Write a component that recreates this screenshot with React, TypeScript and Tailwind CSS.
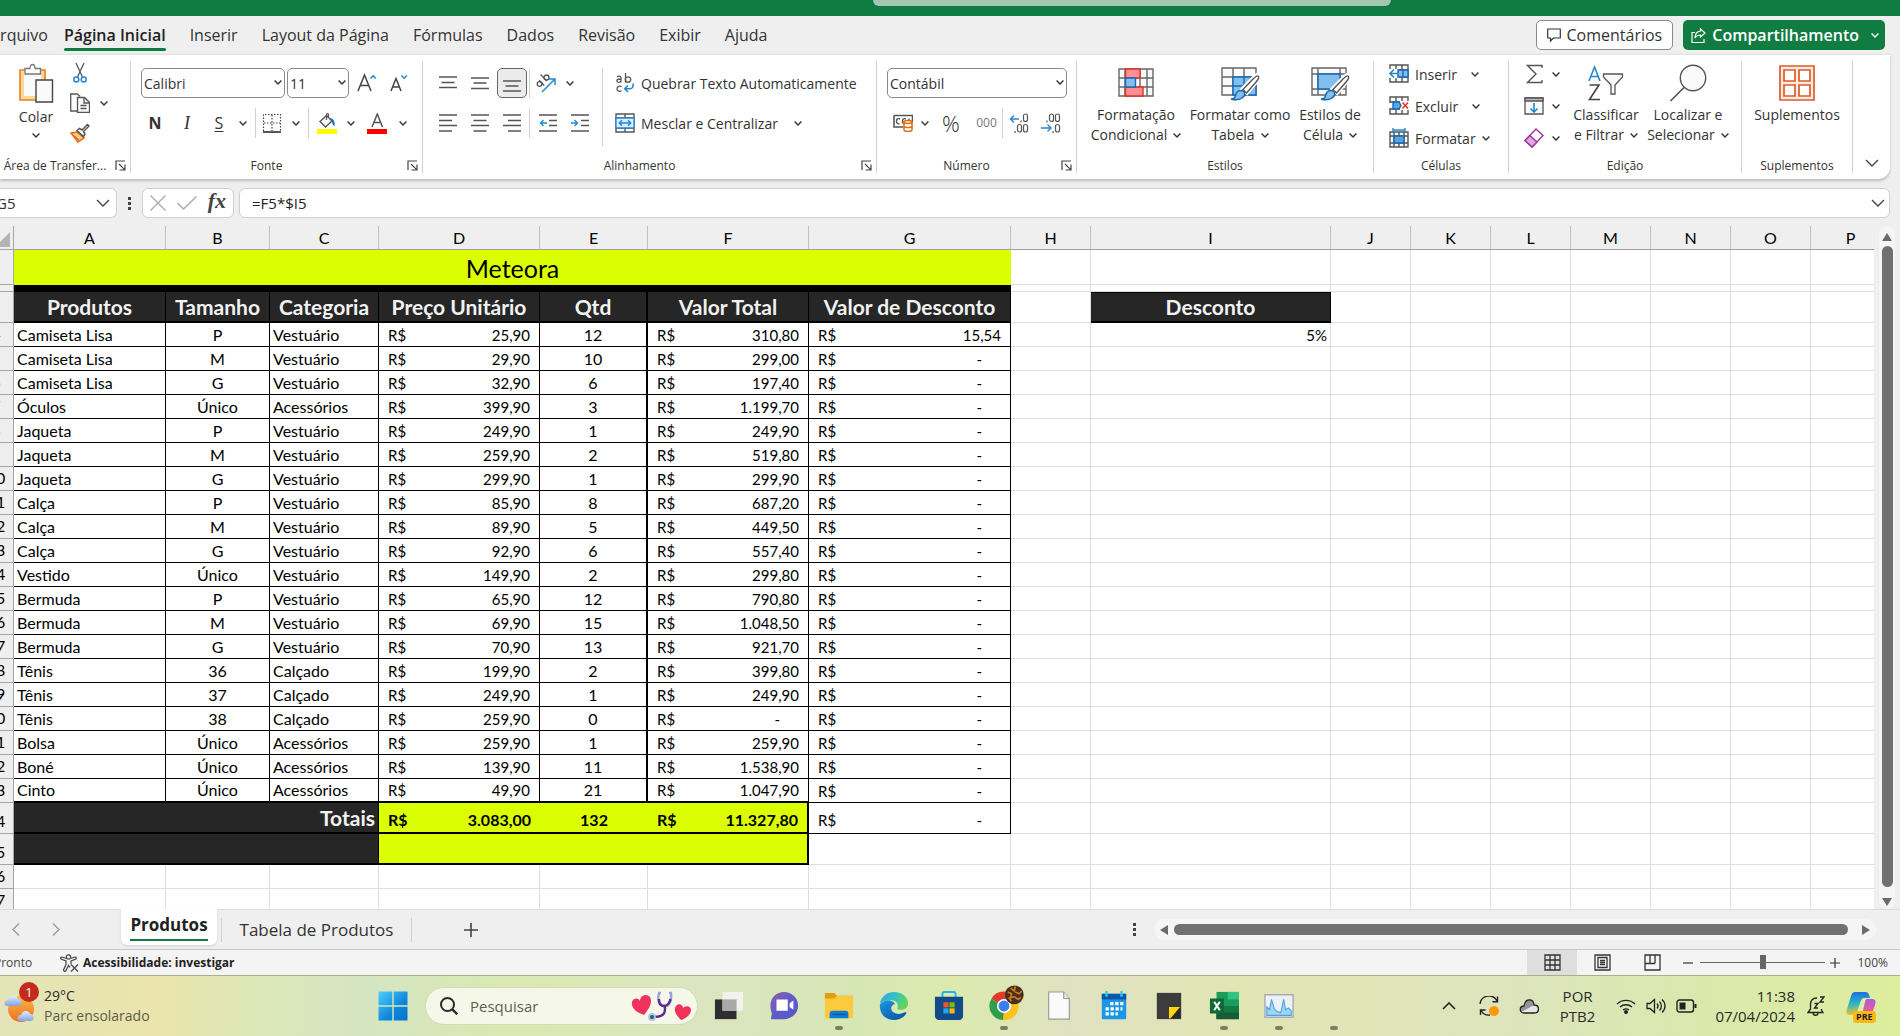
import React, { useState } from 'react';

const tabs = ['Inserir', 'Layout da Página', 'Fórmulas', 'Dados', 'Revisão', 'Exibir', 'Ajuda'];

const columns = ['A', 'B', 'C', 'D', 'E', 'F', 'G', 'H', 'I', 'J', 'K', 'L', 'M', 'N', 'O', 'P'];
const columnWidths = [
  'w-[152px]', 'w-[104px]', 'w-[109px]', 'w-[161px]', 'w-[108px]', 'w-[161px]', 'w-[202px]', 'w-[80px]',
  'w-[240px]', 'w-[80px]', 'w-[80px]', 'w-[80px]', 'w-[80px]', 'w-[80px]', 'w-[80px]', 'w-[80px]',
];

interface Product {
  name: string;
  size: string;
  category: string;
  price: string;
  qty: number;
  total: string;
  discount: string;
}

const row = (name: string, size: string, category: string, price: string, qty: number, total: string, discount = '-'): Product => ({
  name, size, category, price, qty, total, discount,
});

const products: Product[] = [
  row('Camiseta Lisa', 'P', 'Vestuário', '25,90', 12, '310,80', '15,54'),
  row('Camiseta Lisa', 'M', 'Vestuário', '29,90', 10, '299,00'),
  row('Camiseta Lisa', 'G', 'Vestuário', '32,90', 6, '197,40'),
  row('Óculos', 'Único', 'Acessórios', '399,90', 3, '1.199,70'),
  row('Jaqueta', 'P', 'Vestuário', '249,90', 1, '249,90'),
  row('Jaqueta', 'M', 'Vestuário', '259,90', 2, '519,80'),
  row('Jaqueta', 'G', 'Vestuário', '299,90', 1, '299,90'),
  row('Calça', 'P', 'Vestuário', '85,90', 8, '687,20'),
  row('Calça', 'M', 'Vestuário', '89,90', 5, '449,50'),
  row('Calça', 'G', 'Vestuário', '92,90', 6, '557,40'),
  row('Vestido', 'Único', 'Vestuário', '149,90', 2, '299,80'),
  row('Bermuda', 'P', 'Vestuário', '65,90', 12, '790,80'),
  row('Bermuda', 'M', 'Vestuário', '69,90', 15, '1.048,50'),
  row('Bermuda', 'G', 'Vestuário', '70,90', 13, '921,70'),
  row('Tênis', '36', 'Calçado', '199,90', 2, '399,80'),
  row('Tênis', '37', 'Calçado', '249,90', 1, '249,90'),
  row('Tênis', '38', 'Calçado', '259,90', 0, '-'),
  row('Bolsa', 'Único', 'Acessórios', '259,90', 1, '259,90'),
  row('Boné', 'Único', 'Acessórios', '139,90', 11, '1.538,90'),
  row('Cinto', 'Único', 'Acessórios', '49,90', 21, '1.047,90'),
];

/* ---------- small shared pieces ---------- */

const Chev = ({ className = 'w-2 h-[5px]' }: { className?: string }) => (
  <svg viewBox="0 0 8 5" className={`shrink-0 ${className}`} fill="none" stroke="currentColor" strokeWidth="1.4">
    <path d="M.6.6 4 4 7.4.6" />
  </svg>
);

const WideChev = () => (
  <svg viewBox="0 0 14 8" className="h-2 w-3.5 shrink-0" fill="none" stroke="#444" strokeWidth="1.4">
    <path d="M1 1l6 6 6-6" />
  </svg>
);

const Sep = ({ className = 'h-[30px]' }: { className?: string }) => <div className={`w-px shrink-0 bg-[#d0d0d0] ${className}`} />;

const IconButton = ({ label, className = 'w-8', children }: { label: string; className?: string; children: React.ReactNode }) => (
  <button aria-label={label} className={`flex h-[30px] shrink-0 items-center justify-center ${className}`}>
    {children}
  </button>
);

const Picker = ({ label, value, className }: { label: string; value: string; className: string }) => (
  <div className={`relative h-[30px] ${className}`}>
    <select aria-label={label} className="h-full w-full appearance-none rounded-[5px] border border-[#8a8a8a] bg-white pl-0.5 text-[14px] text-[#333]">
      <option>{value}</option>
    </select>
    <Chev className="pointer-events-none absolute right-[3px] top-3 h-[5px] w-2" />
  </div>
);

const Launcher = ({ label }: { label: string }) => (
  <button aria-label={label} className="absolute bottom-0.5 right-1">
    <svg viewBox="0 0 11 11" className="h-[11px] w-[11px]" fill="none" stroke="#444" strokeWidth="1.2">
      <path d="M1 10V1h9M4 4l5.400 5.400M10 4.500V10H4.500" />
    </svg>
  </button>
);

interface GroupProps {
  name: string;
  width: string;
  launcher?: boolean;
  children: React.ReactNode;
}

const Group = ({ name, width, launcher, children }: GroupProps) => (
  <section className={`relative my-1.5 flex shrink-0 flex-col border-r border-[#d0d0d0] ${width}`}>
    <div className="flex h-[95px] shrink-0">{children}</div>
    <h2 className={`whitespace-nowrap text-center text-[12px] leading-5 text-[#333] ${launcher ? 'pr-5' : ''}`}>{name}</h2>
    {launcher && <Launcher label={name} />}
  </section>
);

const BigButton = ({ icon, lines, chev = true, className }: { icon: React.ReactNode; lines: string[]; chev?: boolean; className: string }) => (
  <button className={`flex shrink-0 flex-col items-center whitespace-nowrap text-[14px] leading-5 ${className}`}>
    <span className="flex h-11 items-center">{icon}</span>
    <span>{lines[0]}</span>
    {lines[1] && (
      <span className="flex items-center gap-1.5">
        {lines[1]}
        {chev && <Chev />}
      </span>
    )}
  </button>
);

/* ---------- ribbon icons ---------- */

const PasteIcon = () => (
  <svg viewBox="0 0 36 40" className="h-10 w-9" fill="none">
    <path d="M2 7h25v30H2z" fill="#fbd89b" stroke="#e8811a" strokeWidth="1.6" />
    <path d="M6 9h17v24H6z" fill="#fafafa" />
    <path d="M7 11V5.500h5C12 3 13 1.500 14.500 1.500S17 3 17 5.500h5.500V11z" fill="#fff" stroke="#777" strokeWidth="1.3" />
    <path d="M18 17h16.500v22H18z" fill="#fafafa" stroke="#444" strokeWidth="1.4" />
  </svg>
);

const CutIcon = () => (
  <svg viewBox="0 0 14 20" className="h-5 w-3.5" fill="none">
    <path d="M3 0l6.500 14M11 0L4.500 14" stroke="#555" strokeWidth="1.3" />
    <circle cx="3.300" cy="16.500" r="2.500" stroke="#2488d0" strokeWidth="1.500" />
    <circle cx="10.700" cy="16.500" r="2.500" stroke="#2488d0" strokeWidth="1.500" />
  </svg>
);

const CopyIcon = () => (
  <svg viewBox="0 0 20 20" className="h-5 w-5" fill="none" stroke="#555" strokeWidth="1.3">
    <path d="M7.500 18H.7V1h6.500l3 2.500" />
    <path d="M7.500 4.500h7l5 5v9.800h-12z" fill="#fafafa" />
    <path d="M14 4.500V10h5.500M10.500 12.500h6M10.500 15.500h6" />
  </svg>
);

const BrushIcon = () => (
  <svg viewBox="0 0 20 20" className="h-5 w-5" fill="none">
    <path d="M1 10l6-1 7 6-6 4z" fill="#f9c88b" stroke="#e06c0a" strokeWidth="1.500" />
    <path d="M4 13l5 4" stroke="#e06c0a" strokeWidth="1.200" />
    <path d="M7 7.500l2.500-2L12 7l5.500-5.500L19 3l-5.500 5.500L15 11l-1.500 2.500z" fill="#fff" stroke="#555" strokeWidth="1.500" />
  </svg>
);

const FontSizeIcon = ({ up }: { up?: boolean }) => (
  <svg viewBox="0 0 20 20" className="h-5 w-5" fill="none">
    {up ? (
      <>
        <path d="M1 18L7.500 2 14 18M3.500 12.500h8" stroke="#444" strokeWidth="1.500" />
        <path d="M13.500 5.500l2.700-2.700 2.700 2.700" stroke="#2488d0" strokeWidth="1.500" />
      </>
    ) : (
      <>
        <path d="M2 18L7 5.500 12 18M4 14h6" stroke="#444" strokeWidth="1.500" />
        <path d="M12.500 2.500l2.700 2.700 2.700-2.700" stroke="#2488d0" strokeWidth="1.500" />
      </>
    )}
  </svg>
);

const BordersIcon = () => (
  <svg viewBox="0 0 20 20" className="h-5 w-5" fill="none" stroke="#444">
    <path d="M1.500 18V1.500h17V18M10 2v16M2 10h16" strokeDasharray="1.500 1.500" strokeWidth="1.200" />
    <path d="M1 19h18" strokeWidth="1.800" />
  </svg>
);

const FillIcon = () => (
  <svg viewBox="0 0 20 21" className="h-[21px] w-5" fill="none">
    <path d="M9.500 2.500l5.500 5.500-6.500 6L3 8.500z" fill="#fafafa" stroke="#555" strokeWidth="1.400" />
    <path d="M9.500 7V1.500c0-1.200 2-1.200 2 0V4" stroke="#555" strokeWidth="1.200" />
    <path d="M13 5c3 .5 5.500 3 4.500 8-2-.8-2.500-3-2.500-5z" fill="#1f6fb5" />
    <path d="M0 16h20v5H0z" fill="#ff0" />
  </svg>
);

const FontColorIcon = () => (
  <svg viewBox="0 0 20 21" className="h-[21px] w-5" fill="none">
    <path d="M5 14L10.300 1 15.500 14M6.800 9.500h7" stroke="#555" strokeWidth="1.500" />
    <path d="M0 16h20v5H0z" fill="red" />
  </svg>
);

const Lines = ({ d }: { d: string }) => (
  <svg viewBox="0 0 18 18" className="h-[18px] w-[18px]" fill="none" stroke="#555" strokeWidth="1.400">
    <path d={d} />
  </svg>
);

const OrientationIcon = () => (
  <svg viewBox="0 0 22 20" className="h-5 w-[22px]" fill="none">
    <g stroke="#555" strokeWidth="1.300">
      <circle cx="4.500" cy="11" r="2.300" />
      <path d="M4.200 7.300l5 5.200" />
      <path d="M5.500 1.500l6.500 6.500" />
      <circle cx="11.500" cy="4.500" r="2.500" />
    </g>
    <path d="M7 19L20 6M14 6h6v6" stroke="#2488d0" strokeWidth="1.500" />
  </svg>
);

const IndentIcon = ({ out }: { out?: boolean }) => (
  <svg viewBox="0 0 18 18" className="h-[18px] w-[18px]" fill="none" strokeWidth="1.400">
    <path d="M0 1h18M10 6.500h8M10 11.500h8M0 17h18" stroke="#555" />
    <path d={out ? 'M8 9H1.500M4.500 6L1.500 9l3 3' : 'M0 9h6.500M3.500 6l3 3-3 3'} stroke="#2488d0" />
  </svg>
);

const WrapIcon = () => (
  <svg viewBox="0 0 18 20" className="h-5 w-[18px]" fill="none">
    <g stroke="#555" strokeWidth="1.300">
      <path d="M1 4c1-1.200 4-1.200 4 .7V9.500M5 6c-2 0-4.200 0-4.200 1.800C.8 9.800 4 9.800 5 8" />
      <path d="M9.500 0v9.500" />
      <circle cx="12" cy="6.500" r="2.700" />
      <path d="M5.500 13.700c-1.500-1-4.500-.7-4.500 2s3 3.200 4.500 2" />
    </g>
    <path d="M17 10.500c.5 4-1 5.200-3 5.200H9M12 12.500l-3.300 3.200L12 19" stroke="#2488d0" strokeWidth="1.600" />
  </svg>
);

const MergeIcon = () => (
  <svg viewBox="0 0 20 20" className="h-5 w-5" fill="none">
    <path d="M1 1h18v18H1zM10 1v4M10 15v4M1 5h18M1 15h18" stroke="#555" strokeWidth="1.400" />
    <path d="M1 5h18v10H1z" fill="#dceefb" stroke="#2488d0" strokeWidth="1.300" />
    <path d="M4.500 10h11M7 7.300L4.300 10 7 12.700M13 7.300l2.700 2.700-2.700 2.700" stroke="#2488d0" strokeWidth="1.500" />
  </svg>
);

const CurrencyIcon = () => (
  <svg viewBox="0 0 20 18" className="h-[18px] w-5" fill="none">
    <path d="M1 1.500h18.500V8M1 1.500V13h9" stroke="#555" strokeWidth="1.600" />
    <path d="M7 5c-2.500-1-3.500 0-3.500 2.200S5 10.500 6.500 9.500M13 5c-2-1-3.500 0-3.500 2.200 0 1 .4 2 1 2.500M16 4.500v2" stroke="#555" strokeWidth="1.400" />
    <path d="M11 8c0-2 8-2 8 0v8c0 2-8 2-8 0z" fill="#fff" stroke="#e06c0a" strokeWidth="1.500" />
    <path d="M11 8c0 2 8 2 8 0M11 12c0 2 8 2 8 0" stroke="#e06c0a" strokeWidth="1.500" />
  </svg>
);

const DecimalIcon = ({ more }: { more?: boolean }) => (
  <svg viewBox="0 0 20 20" className="h-5 w-5" fill="none">
    {more ? (
      <>
        <path d="M10 6H1.500M5 2.500L1.500 6 5 9.500" stroke="#2488d0" strokeWidth="1.400" />
        <g stroke="#555" strokeWidth="1.200">
          <rect x="14.500" y="1" width="4" height="7.500" rx="2" />
          <rect x="8.500" y="11.500" width="4" height="7.500" rx="2" />
          <rect x="14.500" y="11.500" width="4" height="7.500" rx="2" />
          <path d="M12 7.500v2M6 18v2" />
        </g>
      </>
    ) : (
      <>
        <path d="M0 15h10M6.500 11.500L10 15l-3.500 3.500" stroke="#2488d0" strokeWidth="1.400" />
        <g stroke="#555" strokeWidth="1.200">
          <rect x="8.500" y="1" width="4" height="7.500" rx="2" />
          <rect x="14.500" y="1" width="4" height="7.500" rx="2" />
          <rect x="14.500" y="11.500" width="4" height="7.500" rx="2" />
          <path d="M6 7.500v2M12 18v2" />
        </g>
      </>
    )}
  </svg>
);

const CondFormatIcon = () => (
  <svg viewBox="0 0 36 36" className="h-9 w-9" fill="none" strokeWidth="1.400">
    <path d="M1 4h34v27H1zM1 13h34M1 22h34M7 4v27M22 4v27M29 4v27" fill="#fafafa" stroke="#666" />
    <path d="M7.500 4H22v9H7.500zM7.500 22H25v9H7.500z" fill="#ff8f94" stroke="#dd3226" />
    <path d="M7.500 13h10v9h-10z" fill="#83beec" stroke="#1768b5" />
  </svg>
);

const StyleBrush = () => (
  <>
    <path d="M37 10c2 1.500 1 3.500-1 6L26 28l-4.500-4 10-10c2-2 4.500-5 5.500-4z" fill="#fff" stroke="#fff" strokeWidth="4" />
    <path d="M37 11c1.500 1 .5 3-1.500 5.500L25.500 28 22 24.500l9.500-10c2-2 4.500-4.500 5.500-3.500z" fill="#fff" stroke="#555" strokeWidth="1.400" />
    <path d="M10 34c4 0 4-2 5-5s4-4.500 7-3c3 2 2 5-1 7s-8 2-11 1z" fill="#83beec" stroke="#1768b5" strokeWidth="1.500" />
  </>
);

const TableStyleIcon = () => (
  <svg viewBox="0 0 38 36" className="h-9 w-[38px] overflow-visible" fill="none" strokeWidth="1.400">
    <path d="M1 3h34v27H1zM1 12h34M1 21h34M12 3v27M23 3v27" fill="#fafafa" stroke="#666" />
    <path d="M12 12h23v18H12zM12 21h23M23 12v18" fill="#83beec" stroke="#1768b5" />
    <StyleBrush />
  </svg>
);

const CellStyleIcon = () => (
  <svg viewBox="0 0 38 36" className="h-9 w-[38px] overflow-visible" fill="none" strokeWidth="1.400">
    <path d="M1 3h34v27H1zM1 9h34M1 24h34M7 3v27M29 3v27" fill="#fafafa" stroke="#666" />
    <path d="M7 9h22v15H7z" fill="#83beec" stroke="#1768b5" />
    <StyleBrush />
  </svg>
);

const CellsIcon = ({ kind }: { kind: 'insert' | 'delete' | 'format' }) => (
  <svg viewBox="0 0 20 20" className="h-5 w-5" fill="none" strokeWidth="1.400">
    {kind === 'insert' && (
      <>
        <path d="M1 1h18v17H1zM1 6h18M1 13h18M7 1v17M13 1v17" fill="#fafafa" stroke="#555" />
        <path d="M0 5h10v9H0z" fill="#fff" />
        <path d="M9 6h10v7H9zM14 6v7" fill="#83beec" stroke="#1768b5" />
        <path d="M10 9.500H1M5 5.500l-4 4 4 4" stroke="#2488d0" strokeWidth="1.600" />
      </>
    )}
    {kind === 'delete' && (
      <>
        <path d="M1 1h18v17H1zM1 6h18M1 13h18M7 1v17M13 1v17" fill="#fafafa" stroke="#555" />
        <path d="M0 7h4v5H0zM11 5h9v9h-9z" fill="#fff" />
        <path d="M4 6h6l2 3.500-2 3.500H4z" fill="#5aa5e0" stroke="#1768b5" />
        <path d="M13.500 6.500l5.500 6M19 6.500l-5.500 6" stroke="#e33" strokeWidth="1.600" />
      </>
    )}
    {kind === 'format' && (
      <>
        <path d="M1 4h18v15H1zM1 8h18M1 15h18M5 4v15M15 4v15M10 4v15" fill="#fafafa" stroke="#555" />
        <path d="M5 8h10v7H5z" fill="#5aa5e0" stroke="#1768b5" />
        <path d="M4 0v4M16 0v4M4 2h12" stroke="#2488d0" />
      </>
    )}
  </svg>
);

const SortIcon = () => (
  <svg viewBox="0 0 36 36" className="h-9 w-9" fill="none" strokeWidth="1.600">
    <path d="M1 16L6.500 2 12 16M3 11.500h7" stroke="#2488d0" />
    <path d="M1.500 20h9.500L1.500 34.500H12" stroke="#444" />
    <path d="M15.500 9h19v3L27 20v9h-4v-9l-7.500-8z" fill="#fafafa" stroke="#555" strokeWidth="1.300" />
  </svg>
);

const FindIcon = () => (
  <svg viewBox="0 0 38 38" className="h-[38px] w-[38px]" fill="none" stroke="#555" strokeWidth="1.400">
    <circle cx="24" cy="14" r="12.700" fill="#fafafa" />
    <path d="M15 23.500L1.500 37" strokeWidth="1.700" />
  </svg>
);

const AddinsIcon = () => (
  <svg viewBox="0 0 36 36" className="h-9 w-9" fill="none" stroke="#dd5a2b" strokeWidth="1.700">
    <path d="M1 1h34v34H1z" fill="#fdece4" />
    <path d="M5 5h11v11H5zM20 5h11v11H20zM5 20h11v11H5zM20 20h11v11H20z" fill="#fff" />
  </svg>
);

/* ---------- ribbon ---------- */

const EditRow = ({ label, children }: { label: string; children: React.ReactNode }) => (
  <button aria-label={label} className="flex h-8 items-center gap-2">
    <span className="flex w-5 justify-center">{children}</span>
    <Chev />
  </button>
);

const Ribbon = () => (
  <div className="mr-2.5 flex h-[125px] shrink-0 rounded-br-xl border-t border-[#e3e3e3] bg-white text-[#333] shadow-[0_2px_3px_rgba(0,0,0,0.22)]">
    <Group name="Área de Transfer..." width="w-[131px]" launcher>
      <button className="ml-4 flex w-10 flex-col items-center pt-0.5 text-[14px] leading-5">
        <PasteIcon />
        <span className="mt-1">Colar</span>
        <Chev className="mt-1.5 h-[5px] w-2" />
      </button>
      <div className="-mt-[3px] ml-3 flex flex-col">
        <IconButton label="Recortar" className="h-8 w-6"><CutIcon /></IconButton>
        <div className="flex items-center gap-2">
          <IconButton label="Copiar" className="h-8 w-6"><CopyIcon /></IconButton>
          <Chev />
        </div>
        <IconButton label="Pincel de Formatação" className="h-8 w-6"><BrushIcon /></IconButton>
      </div>
    </Group>

    <Group name="Fonte" width="w-[292px]" launcher>
      <div className="flex flex-col gap-2.5 pl-2 pt-[7px]">
        <div className="flex pl-0.5">
          <Picker label="Fonte" value="Calibri" className="w-36" />
          <Picker label="Tamanho da fonte" value="11" className="ml-0.5 w-[62px]" />
          <IconButton label="Aumentar fonte" className="ml-1.5 w-6"><FontSizeIcon up /></IconButton>
          <IconButton label="Diminuir fonte" className="ml-2 w-6"><FontSizeIcon /></IconButton>
        </div>
        <div className="flex items-center">
          <IconButton label="Negrito"><b className="text-[16px]">N</b></IconButton>
          <IconButton label="Itálico"><i className="font-['Liberation_Serif',serif] text-[18px]">I</i></IconButton>
          <IconButton label="Sublinhado"><u className="text-[16px] underline-offset-2">S</u></IconButton>
          <IconButton label="Mais sublinhados" className="w-4"><Chev /></IconButton>
          <Sep className="ml-1 h-[30px]" />
          <IconButton label="Bordas"><BordersIcon /></IconButton>
          <IconButton label="Mais bordas" className="w-4"><Chev /></IconButton>
          <Sep className="ml-1 h-[30px]" />
          <IconButton label="Cor de preenchimento" className="w-9"><FillIcon /></IconButton>
          <IconButton label="Mais cores" className="w-3"><Chev /></IconButton>
          <IconButton label="Cor da fonte" className="w-10"><FontColorIcon /></IconButton>
          <IconButton label="Mais cores da fonte" className="w-3"><Chev /></IconButton>
        </div>
      </div>
    </Group>

    <Group name="Alinhamento" width="w-[454px]" launcher>
      <div className="flex flex-col gap-2.5 pl-[9px] pt-[7px]">
        <div className="flex items-center">
          <IconButton label="Alinhar em cima"><Lines d="M0 3h18M2.500 8.500h13M0 13.500h18" /></IconButton>
          <IconButton label="Alinhar no meio"><Lines d="M0 4h18M2.500 9h13M0 14.500h18" /></IconButton>
          <IconButton label="Alinhar embaixo" className="ml-px w-[30px] rounded-[5px] border border-[#666] bg-[#ebebeb]">
            <Lines d="M0 7h18M2.500 12h13M0 17h18" />
          </IconButton>
          <Sep className="ml-0.5 h-[30px]" />
          <IconButton label="Orientação"><OrientationIcon /></IconButton>
          <IconButton label="Mais orientação" className="w-4"><Chev /></IconButton>
        </div>
        <div className="flex items-center">
          <IconButton label="Alinhar à esquerda"><Lines d="M0 1h18M0 6.500h13M0 11.500h18M0 17h13" /></IconButton>
          <IconButton label="Centralizar"><Lines d="M0 1h18M2.500 6.500h13M0 11.500h18M2.500 17h13" /></IconButton>
          <IconButton label="Alinhar à direita"><Lines d="M0 1h18M5 6.500h13M0 11.500h18M5 17h13" /></IconButton>
          <Sep className="ml-px mr-0.5 h-[30px]" />
          <IconButton label="Diminuir recuo"><IndentIcon out /></IconButton>
          <IconButton label="Aumentar recuo"><IndentIcon /></IconButton>
        </div>
      </div>
      <Sep className="ml-1.5 mt-[7px] h-[78px]" />
      <div className="flex flex-col gap-2.5 pl-3 pt-[7px] text-[14px]">
        <button className="flex h-[30px] items-center gap-1.5 whitespace-nowrap">
          <span className="flex w-5 justify-center"><WrapIcon /></span>
          Quebrar Texto Automaticamente
        </button>
        <button className="flex h-[30px] items-center gap-1.5 whitespace-nowrap">
          <MergeIcon />
          Mesclar e Centralizar
          <Chev className="ml-2.5 h-[5px] w-2" />
        </button>
      </div>
    </Group>

    <Group name="Número" width="w-[200px]" launcher>
      <div className="flex flex-col gap-2.5 pl-2.5 pt-[7px]">
        <Picker label="Formato de número" value="Contábil" className="w-[180px]" />
        <div className="flex items-center">
          <IconButton label="Formato contábil"><CurrencyIcon /></IconButton>
          <IconButton label="Mais formatos" className="w-3"><Chev /></IconButton>
          <IconButton label="Porcentagem" className="w-10 text-[22px] font-light">%</IconButton>
          <IconButton label="Separador de milhares" className="w-[31px] text-[12px] text-[#777]">000</IconButton>
          <Sep />
          <IconButton label="Aumentar casas decimais"><DecimalIcon more /></IconButton>
          <IconButton label="Diminuir casas decimais"><DecimalIcon /></IconButton>
        </div>
      </div>
    </Group>

    <Group name="Estilos" width="w-[297px]">
      <BigButton icon={<CondFormatIcon />} lines={['Formatação', 'Condicional']} className="ml-2.5 w-[98px]" />
      <BigButton icon={<TableStyleIcon />} lines={['Formatar como', 'Tabela']} className="w-[110px]" />
      <BigButton icon={<CellStyleIcon />} lines={['Estilos de', 'Célula']} className="w-[70px]" />
    </Group>

    <Group name="Células" width="w-[135px]">
      <div className="-mt-[3px] flex flex-col pl-[15px] text-[14px]">
        <button className="flex h-8 items-center gap-1.5"><CellsIcon kind="insert" />Inserir<Chev className="ml-2 h-[5px] w-2" /></button>
        <button className="flex h-8 items-center gap-1.5"><CellsIcon kind="delete" />Excluir<Chev className="ml-2 h-[5px] w-2" /></button>
        <button className="flex h-8 items-center gap-1.5"><CellsIcon kind="format" />Formatar<Chev /></button>
      </div>
    </Group>

    <Group name="Edição" width="w-[233px]">
      <div className="-mt-[3px] flex flex-col pl-[15px]">
        <EditRow label="Soma">
          <svg viewBox="0 0 17 20" className="h-5 w-[17px]" fill="none" stroke="#555" strokeWidth="1.400">
            <path d="M16 4V1.500H1.500L10 10l-8.500 8.500H16V16" />
          </svg>
        </EditRow>
        <EditRow label="Preencher">
          <svg viewBox="0 0 20 20" className="h-5 w-5" fill="none" stroke="#555" strokeWidth="1.300">
            <path d="M1 2h18v16H1z" fill="#fafafa" />
            <path d="M1 2h18v3H1z" fill="#bbb" />
            <path d="M10 7v9M6.500 12.500L10 16l3.500-3.500" stroke="#2488d0" strokeWidth="1.600" />
          </svg>
        </EditRow>
        <EditRow label="Limpar">
          <svg viewBox="0 0 20 20" className="h-5 w-5" fill="none" stroke="#9b36a0" strokeWidth="1.400">
            <path d="M12 1l7 6.500L8 19l-7-6.500z" fill="#fff" />
            <path d="M6 7.500L13 14l-5 5-7-6.500z" fill="#dfa8e0" />
          </svg>
        </EditRow>
      </div>
      <BigButton icon={<SortIcon />} lines={['Classificar', 'e Filtrar']} className="ml-2 w-[76px]" />
      <BigButton icon={<FindIcon />} lines={['Localizar e', 'Selecionar']} className="w-[88px]" />
    </Group>

    <Group name="Suplementos" width="w-[111px]">
      <BigButton icon={<AddinsIcon />} lines={['Suplementos']} className="w-full" />
    </Group>

    <button aria-label="Recolher faixa de opções" className="mb-3 ml-auto mr-[11px] self-end"><WideChev /></button>
  </div>
);

/* ---------- formula bar ---------- */

const FormulaBar = () => {
  const [formula, setFormula] = useState('=F5*$I5');
  return (
    <div className="mt-[9px] flex h-[30px] shrink-0 items-center pr-2.5">
      <div className="flex h-full w-[117px] shrink-0 items-center overflow-hidden rounded-r-md border border-l-0 border-[#d0d0d0] bg-white pr-1.5">
        <input aria-label="Caixa de nome" defaultValue="G5" className="-ml-1 w-0 flex-1 text-[15px] text-[#333] outline-none" />
        <WideChev />
      </div>
      <svg viewBox="0 0 3 13" className="ml-[11px] h-[13px] w-[3px]" fill="#444">
        <path d="M0 0h3v3H0zM0 5h3v3H0zM0 10h3v3H0z" />
      </svg>
      <div className="ml-[11px] flex h-full w-[92px] shrink-0 items-center justify-between rounded-md border border-[#d0d0d0] bg-white px-[7px]">
        <button aria-label="Cancelar">
          <svg viewBox="0 0 16 16" className="h-4 w-4" stroke="#aaa" strokeWidth="1.300"><path d="M.5.5l15 15M15.500.5l-15 15" /></svg>
        </button>
        <button aria-label="Inserir">
          <svg viewBox="0 0 20 14" className="h-3.5 w-5" fill="none" stroke="#aaa" strokeWidth="1.400"><path d="M.5 7l6 6L19.500.5" /></svg>
        </button>
        <button aria-label="Inserir função" className="pb-1 font-['Liberation_Serif',serif] text-[22px] font-bold italic leading-6 text-[#444]">fx</button>
      </div>
      <div className="ml-[5px] flex h-full flex-1 items-center rounded-md border border-[#d0d0d0] bg-white pl-3 pr-1">
        <input
          aria-label="Barra de fórmulas"
          value={formula}
          onChange={(e) => setFormula(e.target.value)}
          className="flex-1 text-[15px] text-[#222] outline-none"
        />
        <WideChev />
      </div>
    </div>
  );
};

/* ---------- spreadsheet ---------- */

const RowHead = ({ n }: { n: number }) => (
  <th scope="row" className="overflow-hidden border-b border-r border-[#a6a6a6] bg-[#efefef] p-0 pb-px align-bottom font-normal">
    <div className="-ml-5 w-8 text-center">{n}</div>
  </th>
);

const Blank = ({ from, to = 15 }: { from: number; to?: number }) => (
  <>
    {columns.slice(from, to + 1).map((c) => (
      <td key={c} className="border-b border-r border-[#dedede]" />
    ))}
  </>
);

const Money = ({ value, className = 'text-[15px]' }: { value: string; className?: string }) => (
  <td className={`border-b border-r border-black p-0 ${className}`}>
    <div className={`flex justify-between pl-[9px] leading-[22px] ${value === '-' ? 'pr-7' : 'pr-[9px]'}`}>
      <span>R$</span>
      <span>{value}</span>
    </div>
  </td>
);

const headCell = 'border-b-2 border-r border-black bg-[#262626] p-0 text-[21px] font-bold leading-[28px] text-[#f2f2f2]';
const totalCell = 'border-b-2 border-black bg-[#dbff00] pt-1 text-[16px] font-bold';

const Sheet = () => (
  <table className="w-[1891px] table-fixed border-separate border-spacing-0 whitespace-nowrap font-['Lato','Liberation_Sans',sans-serif] text-[16px] leading-[22px] text-black">
    <colgroup>
      <col className="w-3.5" />
      {columnWidths.map((w, i) => (
        <col key={i} className={w} />
      ))}
    </colgroup>
    <thead>
      <tr className="h-6 bg-[#efefef]">
        <td className="border-b border-r border-[#a6a6a6] p-0">
          <svg viewBox="0 0 13 23" className="h-[23px] w-[13px]" fill="#b4b4b4"><path d="M10 6v15H-5z" /></svg>
        </td>
        {columns.map((c) => (
          <th key={c} scope="col" className="border-b border-r border-b-[#a0a0a0] border-r-[#c0c0c0] p-0 font-normal">{c}</th>
        ))}
      </tr>
    </thead>
    <tbody>
      <tr className="h-[35px]">
        <RowHead n={1} />
        <td colSpan={7} className="bg-[#dbff00] p-0 text-center text-[25px] leading-8">Meteora</td>
        <Blank from={7} />
      </tr>
      <tr className="h-[7px]">
        <td className="border-b border-r border-[#a6a6a6] bg-[#efefef] p-0" />
        <td colSpan={7} className="bg-black p-0" />
        <Blank from={7} />
      </tr>
      <tr className="h-[31px]">
        <RowHead n={3} />
        <th className={headCell}>Produtos</th>
        <th className={headCell}>Tamanho</th>
        <th className={headCell}>Categoria</th>
        <th className={headCell}>Preço Unitário</th>
        <th className={`${headCell} border-r-2`}>Qtd</th>
        <th className={headCell}>Valor Total</th>
        <th className={headCell}>Valor de Desconto</th>
        <Blank from={7} to={7} />
        <th className={`${headCell} border-t`}>Desconto</th>
        <Blank from={9} />
      </tr>
      {products.map((p, i) => {
        // the last product row carries the thick line above the totals
        const edge = i === products.length - 1 ? 'border-b-2 leading-[20px]' : '';
        return (
          <tr key={i} className="h-6">
            <RowHead n={i + 4} />
            <td className={`border-b border-r border-black p-0 pl-[3px] ${edge}`}>{p.name}</td>
            <td className={`border-b border-r border-black p-0 text-center ${edge}`}>{p.size}</td>
            <td className={`border-b border-r border-black p-0 pl-[3px] ${edge}`}>{p.category}</td>
            <Money value={p.price} className={`text-[15px] ${edge}`} />
            <td className={`border-b border-r-2 border-black p-0 text-center ${edge}`}>{p.qty}</td>
            <Money value={p.total} className={`text-[15px] ${edge}`} />
            <Money value={p.discount} />
            <Blank from={7} to={7} />
            <td className="border-b border-r border-[#dedede] p-0 pr-[3px] text-right text-[15px]">{i === 0 ? '5%' : ''}</td>
            <Blank from={9} />
          </tr>
        );
      })}
      <tr className="h-[31px]">
        <RowHead n={24} />
        <th colSpan={3} className={`${headCell} pr-[3px] text-right`}>Totais</th>
        <Money value="3.083,00" className={`${totalCell} border-r-0`} />
        <td className={`${totalCell} text-center`}>132</td>
        <Money value="11.327,80" className={`${totalCell} border-r-2`} />
        <Money value="-" className="pt-1 text-[15px]" />
        <Blank from={7} />
      </tr>
      <tr className="h-[31px]">
        <RowHead n={25} />
        <td colSpan={3} className={headCell} />
        <td colSpan={3} className="border-b-2 border-r-2 border-black bg-[#dbff00]" />
        <Blank from={6} />
      </tr>
      <tr className="h-6">
        <RowHead n={26} />
        <Blank from={0} />
      </tr>
      <tr className="h-6">
        <RowHead n={27} />
        <Blank from={0} />
      </tr>
    </tbody>
  </table>
);

const Arrow = ({ d, label }: { d: string; label: string }) => (
  <button aria-label={label} className="shrink-0">
    <svg viewBox="0 0 10 10" className="h-2.5 w-2.5" fill="#6b6b6b"><path d={d} /></svg>
  </button>
);

/* ---------- sheet tabs + status ---------- */

const SheetTabs = () => (
  <div className="flex h-10 shrink-0 items-center border-t border-[#dcdcdc] bg-[#efefef] pr-6 text-[#333]">
    <button aria-label="Planilha anterior" className="ml-3">
      <svg viewBox="0 0 8 13" className="h-[13px] w-2" fill="none" stroke="#999" strokeWidth="1.300"><path d="M7 .5l-6 6 6 6" /></svg>
    </button>
    <button aria-label="Próxima planilha" className="ml-8">
      <svg viewBox="0 0 8 13" className="h-[13px] w-2" fill="none" stroke="#999" strokeWidth="1.300"><path d="M1 .5l6 6-6 6" /></svg>
    </button>
    <button className="-mt-px ml-[61px] h-9 w-[96px] self-start rounded-b-md bg-white text-[17px] font-bold leading-6 text-[#222] shadow-sm">
      <span className="inline-block border-b-2 border-[#107c41] pb-0.5">Produtos</span>
    </button>
    <Sep className="ml-1 h-6" />
    <button className="w-[189px] whitespace-nowrap text-[17px]">Tabela de Produtos</button>
    <Sep className="h-6" />
    <button aria-label="Nova planilha" className="ml-[52px]">
      <svg viewBox="0 0 14 14" className="h-3.5 w-3.5" stroke="#444" strokeWidth="1.600"><path d="M7 0v14M0 7h14" /></svg>
    </button>
    <svg viewBox="0 0 3 13" className="ml-auto h-[13px] w-[3px]" fill="#444">
      <path d="M0 0h3v3H0zM0 5h3v3H0zM0 10h3v3H0z" />
    </svg>
    <div className="ml-[18px] flex h-[21px] w-[38vw] items-center gap-[5px] rounded-full bg-[#f5f5f5] px-[5px]">
      <Arrow label="Rolar para a esquerda" d="M9 0v10L1 5z" />
      <div className="mr-2 h-[11px] flex-1 rounded-full bg-[#707070]" />
      <Arrow label="Rolar para a direita" d="M1 0v10l8-5z" />
    </div>
  </div>
);

const StatusBar = () => (
  <div className="flex h-[27px] shrink-0 items-center border-y border-t-[#c6c6c6] border-b-[#a9b08c] bg-[#f4f4f4] text-[12px] text-[#444]">
    <span className="-ml-1.5 w-[66px] shrink-0">Pronto</span>
    <button className="flex items-center gap-1 font-bold text-[#222]">
      <svg viewBox="0 0 19 18" className="h-[18px] w-[19px]" fill="none" stroke="#444" strokeWidth="1.200">
        <circle cx="8.500" cy="3" r="2.200" />
        <path d="M6.500 4.500L2 3C.5 3 .3 4.700 1.500 5.200L6 7v3.500L3.500 16c0 1.500 2 1.800 2.500.5l2.500-5 1.500 2M10.500 4.500L15 3c1.500 0 1.700 1.700.5 2.200L11 7v3" />
        <path d="M11 10.500l7 7M18 10.500l-7 7" />
      </svg>
      Acessibilidade: investigar
    </button>
    <div className="ml-auto flex h-full items-center">
      <button aria-label="Normal" className="flex h-full w-[50px] items-center justify-center bg-[#dedede]">
        <svg viewBox="0 0 17 17" className="h-[17px] w-[17px]" fill="none" stroke="#333" strokeWidth="1.300">
          <path d="M1 1h15v15H1zM6 1v15M11 1v15M1 6h15M1 11h15" />
        </svg>
      </button>
      <button aria-label="Layout da Página" className="flex h-full w-[50px] items-center justify-center">
        <svg viewBox="0 0 17 17" className="h-[17px] w-[17px]" fill="none" stroke="#333" strokeWidth="1.300">
          <path d="M1 1h15v15H1zM4 3.500h9v10H4zM6 6.500h5M6 8.500h5M6 10.500h5" />
        </svg>
      </button>
      <button aria-label="Quebra de página" className="flex h-full w-[50px] items-center justify-center">
        <svg viewBox="0 0 17 17" className="h-[17px] w-[17px]" fill="none" stroke="#333" strokeWidth="1.300">
          <path d="M1 1h15v15H1zM6 1v8.500M11 1v8.500M1 9.500h10" />
        </svg>
      </button>
      <button aria-label="Menos zoom" className="ml-1.5 text-[#333]">
        <svg viewBox="0 0 10 10" className="h-2.5 w-2.5" stroke="currentColor" strokeWidth="1.200"><path d="M0 5h10" /></svg>
      </button>
      <input
        type="range"
        aria-label="Zoom"
        min={10}
        max={190}
        defaultValue={100}
        className="ml-[7px] h-4 w-[125px] appearance-none bg-transparent [&::-webkit-slider-runnable-track]:h-px [&::-webkit-slider-runnable-track]:bg-[#666] [&::-webkit-slider-thumb]:-mt-[7px] [&::-webkit-slider-thumb]:h-3.5 [&::-webkit-slider-thumb]:w-1.5 [&::-webkit-slider-thumb]:appearance-none [&::-webkit-slider-thumb]:bg-[#666]"
      />
      <button aria-label="Mais zoom" className="ml-[5px] text-[#333]">
        <svg viewBox="0 0 10 10" className="h-2.5 w-2.5" stroke="currentColor" strokeWidth="1.200"><path d="M0 5h10M5 0v10" /></svg>
      </button>
      <span className="mr-3 w-12 text-right">100%</span>
    </div>
  </div>
);

/* ---------- taskbar ---------- */

const WeatherIcon = () => (
  <svg viewBox="0 0 36 36" className="h-9 w-9">
    <defs>
      <linearGradient id="sun" x1="0" y1="0" x2="0" y2="1"><stop stopColor="#f8b84a" /><stop offset="1" stopColor="#f0701c" /></linearGradient>
      <linearGradient id="cloud" x1="0" y1="0" x2="0" y2="1"><stop stopColor="#e0ecfb" /><stop offset="1" stopColor="#85a4e0" /></linearGradient>
    </defs>
    <circle cx="17" cy="21" r="13" fill="url(#sun)" />
    <path d="M3 18c-4-1-3-6 1-6 1-5 8-6 10-1 5 0 5 7 0 7z" fill="url(#cloud)" />
    <path d="M16 33c-4-1-3-6 1-6 1-5 8-5 9-1 5 0 5 7 0 7z" fill="url(#cloud)" />
  </svg>
);

const StartIcon = () => (
  <svg viewBox="0 0 30 30" className="h-[30px] w-[30px]">
    <defs>
      <linearGradient id="win" x1="0" y1="0" x2="1" y2="1"><stop stopColor="#4fd0fb" /><stop offset=".6" stopColor="#0f86dc" /><stop offset="1" stopColor="#0672cc" /></linearGradient>
    </defs>
    <path d="M.5.5h13.800v13.800H.5zM15.700.5h13.800v13.800H15.700zM.5 15.700h13.800v13.800H.5zM15.700 15.700h13.800v13.800H15.700z" fill="url(#win)" />
  </svg>
);

const HeartsIcon = () => (
  <svg viewBox="0 0 62 32" className="h-8 w-[62px]" fill="none">
    <path d="M13 25C4 22 0 17 1 12c1-4 6-5 8-1 0-6 7-8 10-4 3 5-1 12-6 18z" fill="#f2305c" />
    <path d="M50 30c-5-5-8-10-5-14 2-3 7-2 7 2 3-3 8-2 8 2s-4 8-10 10z" fill="#f2305c" />
    <path d="M30 3h-2c-2 8 0 12 5 13s8-5 7-13h-2" stroke="#9aa3d4" strokeWidth="2.400" />
    <path d="M28 9c0 5 2 7 5 7s6-3 6.500-7M33.500 16c2 8-2 11-11.500 11" stroke="#5b2d91" strokeWidth="2.400" />
    <circle cx="21" cy="27" r="3" fill="#456" stroke="#a8c8e8" strokeWidth="1.800" />
  </svg>
);

const taskIcons: { label: string; running?: boolean; icon: React.ReactNode }[] = [
  {
    label: 'Visão de tarefas',
    icon: (
      <>
        <path d="M1 9h23v21H1z" fill="#2e2e2e" />
        <path d="M9 1h22v20H9z" fill="#f4f4f4" fillOpacity=".85" />
        <path d="M9 9h15v12H9z" fill="#a9a9a9" />
      </>
    ),
  },
  {
    label: 'Chat',
    icon: (
      <>
        <defs><linearGradient id="chat" x1="0" y1="0" x2="1" y2="1"><stop stopColor="#8d62a8" /><stop offset=".5" stopColor="#5f5bc8" /><stop offset="1" stopColor="#5558c8" /></linearGradient></defs>
        <path d="M16 1c8 0 15 6 15 14.500S24 30 16 30H2l1-6C-2 10 6 1 16 1z" fill="url(#chat)" />
        <path d="M8 9h12v12H8zM22 13l4-3v10l-4-3z" fill="#fff" />
      </>
    ),
  },
  {
    label: 'Explorador de Arquivos',
    running: true,
    icon: (
      <>
        <path d="M1 2h10l3 3h17v8H1z" fill="#dfa00a" />
        <path d="M1 8h10l3-3h17v24H1z" fill="#fdc93d" />
        <path d="M6 29v-5c0-2 1-3 3-3h14c2 0 3 1 3 3v5z" fill="#0f7bd0" />
        <path d="M9 25h14" stroke="#0a4f94" />
      </>
    ),
  },
  {
    label: 'Edge',
    icon: (
      <>
        <defs>
          <linearGradient id="edge1" x1="0" y1="0" x2="1" y2=".5"><stop stopColor="#2f9fe0" /><stop offset=".5" stopColor="#35c1c8" /><stop offset="1" stopColor="#5fd657" /></linearGradient>
          <linearGradient id="edge2" x1="0" y1="0" x2="1" y2="1"><stop stopColor="#1b98e0" /><stop offset="1" stopColor="#0b4f9c" /></linearGradient>
        </defs>
        <path d="M1 13C3 5 9 1 16 1c9 0 15 6 15 12 0 5-4 7-8 7-3 0-4-1-3-3 1-5-4-8-9-7-5 0-8 2-10 3z" fill="url(#edge1)" />
        <path d="M1 14c5-5 14-5 16 0-3 0-4 3-4 5 1 5 8 7 14 4 2-1 3 0 2 1-3 5-8 7-13 7C7 31 0 24 1 14z" fill="url(#edge2)" />
      </>
    ),
  },
  {
    label: 'Microsoft Store',
    icon: (
      <>
        <path d="M9 7V3c0-1 1-2 2-2h10c1 0 2 1 2 2v4" fill="none" stroke="#1fb5f5" strokeWidth="2" />
        <path d="M1 6h30v21c0 2-2 4-4 4H5c-2 0-4-2-4-4z" fill="#124b8a" />
        <path d="M10 12h5.500v5.500H10z" fill="#f0522a" />
        <path d="M16.500 12H22v5.500h-5.500z" fill="#80bb03" />
        <path d="M10 18.500h5.500V24H10z" fill="#23a7ee" />
        <path d="M16.500 18.500H22V24h-5.500z" fill="#fdb90a" />
      </>
    ),
  },
  {
    label: 'Chrome',
    running: true,
    icon: (
      <>
        <path d="M16 16L2.500 8.500A15 15 0 0 1 29 8.500z" fill="#e23b2e" />
        <path d="M16 16L16 31A15 15 0 0 1 2.500 8.500z" fill="#2e9e4d" />
        <path d="M16 16L29.500 8.500A15 15 0 0 1 15 31z" fill="#fcc31e" />
        <circle cx="16" cy="16" r="7.500" fill="#fff" />
        <circle cx="16" cy="16" r="5.800" fill="#3b7ded" />
        <circle cx="27" cy="4" r="10" fill="#46301c" />
        <path d="M20 1l4 2-1 4 4-1 4 3 3-2M23-3l4 3 1-5M28 1l4 2 3-3M21 7l3 4" stroke="#d0761d" strokeWidth="1.800" fill="none" />
      </>
    ),
  },
  {
    label: 'Bloco de notas',
    icon: (
      <>
        <path d="M5 1h16l6 7v22H5z" fill="#fafafa" stroke="#999" strokeWidth="1.200" />
        <path d="M21 1v7h6" fill="#e6e6e6" stroke="#999" strokeWidth="1.200" />
      </>
    ),
  },
  {
    label: 'Calendário',
    icon: (
      <>
        <path d="M3 3h26v26c0 .6-.4 1-1 1H4c-.6 0-1-.4-1-1z" fill="#1a97e8" />
        <path d="M3 3h26v6H3z" fill="#0a56a8" />
        <path d="M8 0v6M24 0v6" stroke="#35c6f6" strokeWidth="2.500" />
        <path d="M12 13.500h14M7 19h18M7 24.500h13" stroke="#fff" strokeWidth="3.500" strokeDasharray="3.500 1.800" />
      </>
    ),
  },
  {
    label: 'Notas',
    icon: (
      <>
        <path d="M3 2h26v28H3z" fill="#3c3c3c" />
        <path d="M16 17h12L18 29h-2z" fill="#ffd60a" />
        <path d="M28 17v12H18z" fill="#2a2a2a" />
      </>
    ),
  },
  {
    label: 'Excel',
    running: true,
    icon: (
      <>
        <path d="M8 1h24v29H8z" fill="#1a9c5b" />
        <path d="M20 1h12v8H20z" fill="#34c481" />
        <path d="M8 16h24v14H8z" fill="#107c41" />
        <path d="M20 23h12v7H8v-7z" fill="#185c37" />
        <path d="M1 8h15v16H1z" fill="#0e6b38" />
        <path d="M5.500 11.500l6 9M11.500 11.500l-6 9" stroke="#fff" strokeWidth="2.200" />
      </>
    ),
  },
  {
    label: 'Monitor de desempenho',
    running: true,
    icon: (
      <>
        <path d="M1 4h30v24H1z" fill="#eef2f6" stroke="#a5acb5" strokeWidth="1.500" />
        <path d="M3 17l3 3 2-11 3 10 3 3 4 1 3-14 2 11 3-2 3 3v5H3z" fill="#9fd5f7" stroke="#4aa5de" strokeWidth="1.200" />
      </>
    ),
  },
  { label: 'Aplicativo', running: true, icon: null },
];

const Taskbar = () => (
  <footer className="flex h-[60px] shrink-0 items-center bg-[linear-gradient(90deg,#e3e4b8_0%,#ebe5ac_8%,#dbe7b8_14%,#d5e5c2_19%,#d9e9b0_27%,#dbe5c0_37%,#d6e7b6_45%,#dceaae_50%,#dfe2c0_56%,#e2e5b4_65%,#dde4bc_80%,#dbe8ac_90%,#deee9e_100%)] text-[14px] leading-5 text-[#2b2b2b]">
    <button className="flex w-[378px] shrink-0 items-center pl-1 text-left">
      <span className="relative">
        <WeatherIcon />
        <span className="absolute -top-1.5 left-[15px] flex h-5 w-5 items-center justify-center rounded-full bg-[#c42b1c] text-[13px] text-white">1</span>
      </span>
      <span className="ml-1">
        <span className="block">29°C</span>
        <span className="block text-[#5c5c46]">Parc ensolarado</span>
      </span>
    </button>
    <button aria-label="Iniciar" className="shrink-0"><StartIcon /></button>
    <label className="ml-[17px] flex h-[38px] w-[273px] shrink-0 items-center rounded-full border border-[#d3dbb8] bg-[#f5f8e9] pl-3.5 pr-1">
      <svg viewBox="0 0 18 18" className="h-[18px] w-[18px]" fill="none" stroke="#2a2a2a" strokeWidth="2">
        <circle cx="7.500" cy="7.500" r="6.500" />
        <path d="M12.300 12.300L17.300 17.300" strokeWidth="2.400" />
      </svg>
      <input placeholder="Pesquisar" aria-label="Pesquisar" className="ml-3 w-0 flex-1 bg-transparent text-[15px] outline-none placeholder:text-[#60604f]" />
      <HeartsIcon />
    </label>
    <nav className="ml-[3px] flex">
      {taskIcons.map((t) => (
        <button key={t.label} aria-label={t.label} className="relative flex h-[60px] w-[55px] items-center justify-center">
          <svg viewBox="0 0 32 32" className="h-[30px] w-[30px] overflow-visible">{t.icon}</svg>
          {t.running && <span className="absolute bottom-1.5 h-1 w-2 rounded-full bg-[#7c8062]" />}
        </button>
      ))}
    </nav>
    <div className="ml-auto flex items-center pr-6 text-[15px]">
      <svg viewBox="0 0 14 8" className="h-2 w-3.5" fill="none" stroke="#222" strokeWidth="1.600"><path d="M1 7l6-6 6 6" /></svg>
      <svg viewBox="0 0 20 20" className="ml-[23px] h-5 w-5" fill="none" stroke="#222" strokeWidth="1.400">
        <path d="M1 8a9 9 0 0 1 17-3M18.500.5v5.200h-5M11 19a9 9 0 0 1-9-4.500M1.500 19v-5h5" />
        <circle cx="15" cy="15" r="5" fill="#ff9800" stroke="none" />
      </svg>
      <svg viewBox="0 0 20 15" className="ml-5 h-[15px] w-5">
        <path d="M5 14c-5 0-5-7 0-7 1-8 10-8 10-1 6 0 6 8 0 8z" fill="#e6e6e6" />
        <path d="M5 7c1-8 10-8 10-1L6 11l-4 2C0 10 1 7 5 7z" fill="#949494" />
        <path d="M5 14c-5 0-5-7 0-7 1-8 10-8 10-1 6 0 6 8 0 8z" fill="none" stroke="#222" strokeWidth="1.300" />
      </svg>
      <span className="ml-[21px] text-center">POR<br />PTB2</span>
      <svg viewBox="0 0 20 16" className="ml-[21px] h-4 w-5" fill="none" stroke="#222" strokeWidth="1.400">
        <path d="M1 6a13 13 0 0 1 18 0M4 9a9 9 0 0 1 12 0M7 12a5 5 0 0 1 6 0" />
        <circle cx="10" cy="14" r="1.300" fill="#222" />
      </svg>
      <svg viewBox="0 0 20 16" className="ml-2.5 h-4 w-5" fill="none" stroke="#222" strokeWidth="1.300">
        <path d="M1 5.500h3L8.500 1.500v13L4 10.500H1zM11 5.500c1.300 1.500 1.300 3.500 0 5M13.500 3.500c2.500 2.500 2.500 6.500 0 9M16 1.500c4 3.500 4 9.500 0 13" />
      </svg>
      <svg viewBox="0 0 21 14" className="ml-2.5 h-3.5 w-[21px]" fill="none" stroke="#222" strokeWidth="1.400">
        <rect x="1" y="1" width="16.500" height="12" rx="2.500" />
        <path d="M19.500 5v4" strokeWidth="2" />
        <path d="M3.500 3.500h6v7h-6z" fill="#222" stroke="none" />
      </svg>
      <time className="ml-[18px] text-right">11:38<br />07/04/2024</time>
      <svg viewBox="0 0 18 20" className="ml-3 h-5 w-[18px]" fill="none" stroke="#222" strokeWidth="1.300">
        <path d="M10 2C5 2 3.500 5 3.500 8.500V13L1 16.500h15L14.500 14v-1M6 17c0 3 5 3 5 0" />
        <path d="M13 1h4l-4 5h4M7.500 7.500h3.500l-3.500 4.500H11" />
      </svg>
      <span className="relative ml-[21px]">
        <svg viewBox="0 0 30 30" className="h-[30px] w-[30px]">
          <defs>
            <linearGradient id="cop1" x1="0" y1="0" x2="0" y2="1"><stop stopColor="#1d6fe0" /><stop offset=".5" stopColor="#26b7c8" /><stop offset="1" stopColor="#f2c02c" /></linearGradient>
            <linearGradient id="cop2" x1="0" y1="0" x2="0" y2="1"><stop stopColor="#a55be8" /><stop offset=".6" stopColor="#ee5a93" /><stop offset="1" stopColor="#f99b4f" /></linearGradient>
          </defs>
          <path d="M9 1h11c2 0 3 2 4 6h-6c-2 0-3 2-4 5l-3 9c-1 2-2 3-4 3H4c-4 0-4-3-3-6L5 5c1-3 2-4 4-4z" fill="url(#cop1)" />
          <path d="M21 8h5c4 0 4 3 3 6l-4 11c-1 3-2 4-4 4H11c3 0 4-2 5-5l3-13c.4-2 1-3 2-3z" fill="url(#cop2)" />
        </svg>
        <span className="absolute -bottom-0.5 left-[7px] rounded-[3px] bg-[#fdb913] px-[3px] text-[9px] font-bold leading-3 text-[#222]">PRE</span>
      </span>
    </div>
  </footer>
);

/* ---------- page ---------- */

export default function App() {
  return (
    <div className="flex h-screen flex-col overflow-hidden bg-[#efefef] font-['Open_Sans','Noto_Sans',sans-serif]">
      <div className="flex h-4 shrink-0 justify-center bg-[#107c41] pl-[363px]">
        <div className="h-1.5 w-[518px] rounded-b-md bg-[#a0c8b3]" />
      </div>

      <header className="flex h-[38px] shrink-0 items-center pr-[15px] text-[16px] text-[#333]">
        <nav className="flex items-center gap-6 whitespace-nowrap">
          <a href="#arquivo" className="-ml-2.5">Arquivo</a>
          <a href="#inicio" className="relative -ml-2 font-semibold text-[#222]">
            Página Inicial
            <span className="absolute inset-x-0 -bottom-1 h-[3px] rounded-full bg-[#107c41]" />
          </a>
          {tabs.map((t) => (
            <a key={t} href="#aba">{t}</a>
          ))}
        </nav>
        <button className="ml-auto flex h-[30px] items-center gap-1.5 rounded-[5px] border border-[#8a8a8a] bg-white px-2.5">
          <svg viewBox="0 0 14 14" className="h-3.5 w-3.5" fill="none" stroke="#333" strokeWidth="1.200">
            <path d="M.7 1h12.600v9H6.500L3.500 13v-3H.7z" />
          </svg>
          Comentários
        </button>
        <button className="ml-2.5 flex h-[30px] items-center gap-1.5 rounded-[5px] bg-[#107c41] px-1.5 pl-2 font-semibold text-white">
          <svg viewBox="0 0 15 15" className="h-[15px] w-[15px]" fill="none" stroke="#fff" strokeWidth="1.200">
            <path d="M4 4.500H1v10h12V11M9.500 1l4.500 4-4.500 4V7C6.500 7 5 8 4 10c0-4 2-6.500 5.500-7z" />
          </svg>
          Compartilhamento
          <Chev className="ml-1.5 h-[5px] w-2" />
        </button>
      </header>

      <Ribbon />
      <FormulaBar />

      <main className="mt-2 flex min-h-0 flex-1">
        <div className="min-w-0 flex-1 overflow-hidden bg-white">
          <Sheet />
        </div>
        <div className="mx-[5px] flex w-4 shrink-0 flex-col items-center gap-1 rounded-full bg-[#f5f5f5] pb-0.5 pt-1.5">
          <Arrow label="Rolar para cima" d="M0 9h10L5 1z" />
          <div className="mb-1.5 w-[11px] flex-1 rounded-full bg-[#707070]" />
          <Arrow label="Rolar para baixo" d="M0 1h10L5 9z" />
        </div>
      </main>

      <SheetTabs />
      <StatusBar />
      <Taskbar />
    </div>
  );
}
